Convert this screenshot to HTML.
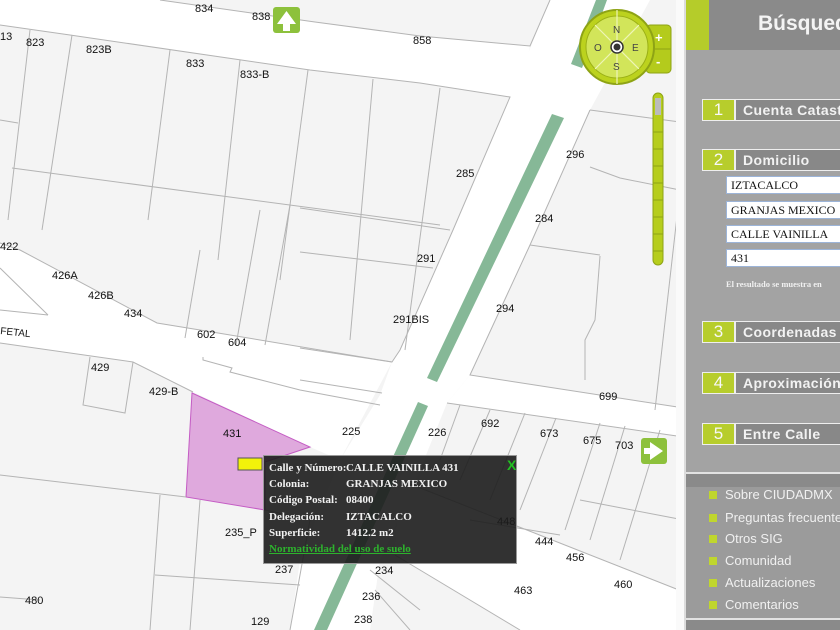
<!DOCTYPE html>
<html><head><meta charset="utf-8"><style>
body{margin:0;width:840px;height:630px;overflow:hidden;background:#f4f4f4;position:relative;font-family:"Liberation Sans",sans-serif}
svg{position:absolute;left:0;top:0}
.pan{position:absolute;left:686px;top:0;width:154px;height:630px}
.hd{position:absolute;left:0;top:0;width:156px;height:50px;background:#8a8a8a}
.hd .g{position:absolute;left:0;top:0;width:23px;height:50px;background:#b5cc2a}
.hd .t{position:absolute;left:72px;top:12px;color:#f4f4f4;font-weight:bold;font-size:21px;white-space:nowrap}
.sec{position:absolute;left:16px;width:150px;height:20px;border:1px solid #eee;background:#888;white-space:nowrap}
.sec b{position:absolute;left:0;top:0;width:31px;height:20px;background:#b7cd2c;color:#f8f8f8;font-weight:normal;font-size:17px;text-align:center;line-height:20px;border-right:2px solid #eee}
.sec span{position:absolute;left:40px;top:2px;color:#f2f2f2;font-weight:bold;font-size:14px;letter-spacing:.4px}
.inp{position:absolute;left:40px;width:120px;height:16px;background:#fff;border:1px solid #9cb4d8;font-family:"Liberation Serif",serif;font-size:12px;line-height:16px;padding-left:4px;white-space:nowrap;color:#111}
.note{position:absolute;left:40px;top:279px;font-family:"Liberation Serif",serif;font-size:8.5px;font-weight:bold;color:#f0f0f0;white-space:nowrap}
.mi{position:absolute;left:39px;color:#f0f0f0;font-size:13px;white-space:nowrap}
.mi:before{content:"";position:absolute;left:-16px;top:4px;width:8px;height:8px;background:#c0d62e}
.pop{position:absolute;left:263px;top:455px;width:252px;height:107px;background:rgba(28,28,28,.9);border:1px solid #999;font-family:"Liberation Serif",serif;font-weight:bold;font-size:11px;color:#f2f2f2}
.pop div{position:absolute;white-space:nowrap}
</style></head><body>
<svg width="840" height="630" viewBox="0 0 840 630">
<g fill="#fff">
<polygon points="0,0 160,0 315,22 420,36 530,46 520,90 510,97 420,83 310,70 70,35 0,25"/>
<polygon points="550,0 650,0 590,110 530,245 470,375 447,403 420,470 380,560 370,630 290,630 300,560 340,460 380,395 392,362 400,350 453,230 510,97"/>
<polygon points="0,243 20,250 157,323 200,330 392,362 340,460 310,447 193,392 133,362 0,343"/>
<polygon points="470,375 684,408 684,437 447,403"/>
<polygon points="400,480 684,592 684,630 520,630 395,555"/>
</g>
<polygon points="192,393 310,447 265,462 265,510 186,497" fill="#dfa9dd" stroke="#c45cc4" stroke-width="1"/>
<g fill="#86b897">
<polygon points="596,0 607,0 582,68 571,64"/>
<polygon points="552,114 564,118 437,382 427,378"/>
<polygon points="418,402 428,406 327,630 314,630"/>
</g>
<g stroke="#b4b4b4" stroke-width="1" fill="none">
<polyline points="160,0 315,22 420,36 530,46 550,0"/>
<polyline points="0,25 70,35 310,70 420,83 510,97 453,230 400,350 392,362 200,330 157,323 20,250 0,243"/>
<polyline points="590,110 680,122"/>
<polyline points="590,110 530,245 470,375 684,408"/>
<polyline points="447,403 684,437"/>
<polyline points="0,343 133,362 193,392"/>
<line x1="30" y1="30" x2="8" y2="220"/><line x1="72" y1="35" x2="42" y2="230"/><line x1="170" y1="50" x2="148" y2="220"/>
<line x1="240" y1="60" x2="218" y2="260"/><line x1="308" y1="70" x2="280" y2="280"/>
<line x1="373" y1="79" x2="350" y2="340"/><line x1="440" y1="88" x2="405" y2="350"/>
<line x1="0" y1="120" x2="18" y2="123"/><line x1="12" y1="168" x2="440" y2="225"/>
<line x1="300" y1="208" x2="450" y2="230"/><line x1="300" y1="252" x2="433" y2="268"/>
<line x1="300" y1="348" x2="392" y2="362"/><line x1="300" y1="380" x2="382" y2="393"/>
<line x1="200" y1="250" x2="185" y2="338"/><line x1="260" y1="210" x2="236" y2="345"/><line x1="290" y1="205" x2="265" y2="345"/>
<line x1="0" y1="268" x2="48" y2="315"/><line x1="48" y1="315" x2="0" y2="310"/>
<polyline points="90,357 83,405 125,413 133,362"/>
<polyline points="203,357 203,360 232,368 230,372 300,390 380,405"/>
<line x1="0" y1="475" x2="186" y2="497"/>
<polyline points="265,510 310,520 290,630"/><line x1="160" y1="495" x2="150" y2="630"/>
<line x1="200" y1="500" x2="190" y2="630"/>
<line x1="0" y1="597" x2="40" y2="600"/><line x1="155" y1="575" x2="300" y2="585"/>
<line x1="530" y1="245" x2="600" y2="255"/><polyline points="590,167 620,178 680,190"/>
<polyline points="600,256 595,320 585,340 585,380"/><line x1="680" y1="190" x2="655" y2="410"/>
<line x1="460" y1="405" x2="440" y2="460"/><line x1="490" y1="410" x2="460" y2="480"/>
<line x1="525" y1="413" x2="490" y2="500"/><line x1="556" y1="418" x2="520" y2="510"/>
<line x1="600" y1="423" x2="565" y2="530"/><line x1="625" y1="426" x2="590" y2="540"/>
<line x1="660" y1="430" x2="620" y2="560"/>
<line x1="470" y1="520" x2="560" y2="535"/><line x1="580" y1="500" x2="684" y2="520"/>
<polyline points="400,480 684,592"/><polyline points="395,555 520,630"/>
<line x1="370" y1="570" x2="420" y2="610"/><line x1="375" y1="590" x2="410" y2="630"/>
</g>
<g font-family="Liberation Sans,sans-serif" font-size="11" fill="#111">
<text x="195" y="12">834</text><text x="252" y="20">838</text><text x="413" y="44">858</text>
<text x="0" y="40">13</text><text x="26" y="46">823</text><text x="86" y="53">823B</text>
<text x="186" y="67">833</text><text x="240" y="78">833-B</text>
<text x="456" y="177">285</text><text x="566" y="158">296</text><text x="535" y="222">284</text>
<text x="0" y="250">422</text><text x="52" y="279">426A</text><text x="88" y="299">426B</text>
<text x="124" y="317">434</text><text x="417" y="262">291</text><text x="393" y="323">291BIS</text>
<text x="496" y="312">294</text><text x="197" y="338">602</text><text x="228" y="346">604</text>
<text x="0" y="334" font-size="10" transform="rotate(6 0 334)">FETAL</text>
<text x="91" y="371">429</text><text x="149" y="395">429-B</text>
<text x="599" y="400">699</text><text x="223" y="437">431</text><text x="342" y="435">225</text>
<text x="428" y="436">226</text><text x="481" y="427">692</text><text x="540" y="437">673</text>
<text x="583" y="444">675</text><text x="615" y="449">703</text>
<text x="225" y="536">235_P</text><text x="497" y="525">448</text><text x="535" y="545">444</text>
<text x="566" y="561">456</text><text x="614" y="588">460</text><text x="514" y="594">463</text>
<text x="275" y="573">237</text><text x="375" y="574">234</text><text x="25" y="604">480</text>
<text x="362" y="600">236</text><text x="251" y="625">129</text><text x="354" y="623">238</text>
</g>
<g>
<rect x="273" y="7" width="27" height="26" rx="3" fill="#8dc13c"/>
<polygon points="286.5,11 296,24 290,24 290,31 283,31 283,24 277,24" fill="#fff"/>
<rect x="641" y="438" width="26" height="26" rx="3" fill="#8dc13c"/>
<polygon points="663,451 650,442 650,448 644,448 644,454 650,454 650,460" fill="#fff"/>
<rect x="238" y="458" width="24" height="12" fill="#f2f20a" stroke="#555" stroke-width="1"/>
</g>
<g>
<rect x="646" y="25" width="25" height="48" rx="4" fill="#b4cb1c" stroke="#8ea315"/>
<line x1="646" y1="49" x2="671" y2="49" stroke="#8ea315"/>
<text x="655" y="42" font-size="13" fill="#fff" font-weight="bold">+</text>
<text x="656" y="66" font-size="13" fill="#fff" font-weight="bold">-</text>
<circle cx="617" cy="47" r="37" fill="#bcd21e" stroke="#8ea315" stroke-width="2"/>
<circle cx="617" cy="47" r="31" fill="#d2e55a" stroke="#9bb016"/>
<g stroke="#eef5b8" stroke-width="1.2"><line x1="595" y1="25" x2="639" y2="69"/><line x1="639" y1="25" x2="595" y2="69"/><line x1="617" y1="10" x2="617" y2="84"/></g>
<circle cx="617" cy="47" r="6" fill="#fff" stroke="#333" stroke-width="1.5"/><circle cx="617" cy="47" r="3.5" fill="#333"/>
<g font-size="10" fill="#444" font-family="Liberation Sans,sans-serif"><text x="613" y="33">N</text><text x="613" y="70">S</text><text x="594" y="51">O</text><text x="632" y="51">E</text></g>
<rect x="653" y="93" width="10" height="172" rx="5" fill="#b6cd1c" stroke="#8ea315"/>
<rect x="655" y="98" width="6" height="17" fill="#bbb"/>
<g stroke="#8ea315"><line x1="653" y1="132" x2="663" y2="132"/><line x1="653" y1="149" x2="663" y2="149"/><line x1="653" y1="166" x2="663" y2="166"/><line x1="653" y1="183" x2="663" y2="183"/><line x1="653" y1="200" x2="663" y2="200"/><line x1="653" y1="217" x2="663" y2="217"/><line x1="653" y1="234" x2="663" y2="234"/><line x1="653" y1="251" x2="663" y2="251"/></g>
</g>
<rect x="676" y="0" width="8" height="630" fill="#fafafa"/>
<rect x="684" y="0" width="156" height="630" fill="#dcdcdc"/>
<rect x="686" y="0" width="154" height="630" fill="#a3a3a3"/>
<rect x="686" y="472" width="154" height="15" fill="#e2e2e2"/>
<rect x="686" y="474" width="154" height="13" fill="#8a8a8a"/>
<rect x="686" y="487" width="154" height="131" fill="#9b9b9b"/>
<rect x="686" y="618" width="154" height="12" fill="#e2e2e2"/>
<rect x="686" y="620" width="154" height="10" fill="#8a8a8a"/>
</svg>
<div class="pop">
<div style="left:5px;top:6px">Calle y Número:</div><div style="left:82px;top:6px">CALLE VAINILLA 431</div>
<div style="left:5px;top:22px">Colonia:</div><div style="left:82px;top:22px">GRANJAS MEXICO</div>
<div style="left:5px;top:38px">Código Postal:</div><div style="left:82px;top:38px">08400</div>
<div style="left:5px;top:55px">Delegación:</div><div style="left:82px;top:55px">IZTACALCO</div>
<div style="left:5px;top:71px">Superficie:</div><div style="left:82px;top:71px">1412.2 m2</div>
<div style="left:5px;top:87px;color:#2db32d;text-decoration:underline">Normatividad del uso de suelo</div>
<div style="left:243px;top:1px;color:#22c022;font-family:'Liberation Sans',sans-serif;font-size:14px">X</div>
</div>
<div class="pan">
<div class="hd"><div class="g"></div><div class="t">Búsqueda</div></div>
<div class="sec" style="top:99px"><b>1</b><span>Cuenta Catastral</span></div>
<div class="sec" style="top:149px"><b>2</b><span>Domicilio</span></div>
<div class="inp" style="top:176px">IZTACALCO</div>
<div class="inp" style="top:201px">GRANJAS MEXICO</div>
<div class="inp" style="top:225px">CALLE VAINILLA</div>
<div class="inp" style="top:249px">431</div>
<div class="note">El resultado se muestra en</div>
<div class="sec" style="top:321px"><b>3</b><span>Coordenadas</span></div>
<div class="sec" style="top:372px"><b>4</b><span>Aproximación</span></div>
<div class="sec" style="top:423px"><b>5</b><span>Entre Calle</span></div>
<div class="mi" style="top:487px">Sobre CIUDADMX</div>
<div class="mi" style="top:510px">Preguntas frecuentes</div>
<div class="mi" style="top:531px">Otros SIG</div>
<div class="mi" style="top:553px">Comunidad</div>
<div class="mi" style="top:575px">Actualizaciones</div>
<div class="mi" style="top:597px">Comentarios</div>
</div>
</body></html>
